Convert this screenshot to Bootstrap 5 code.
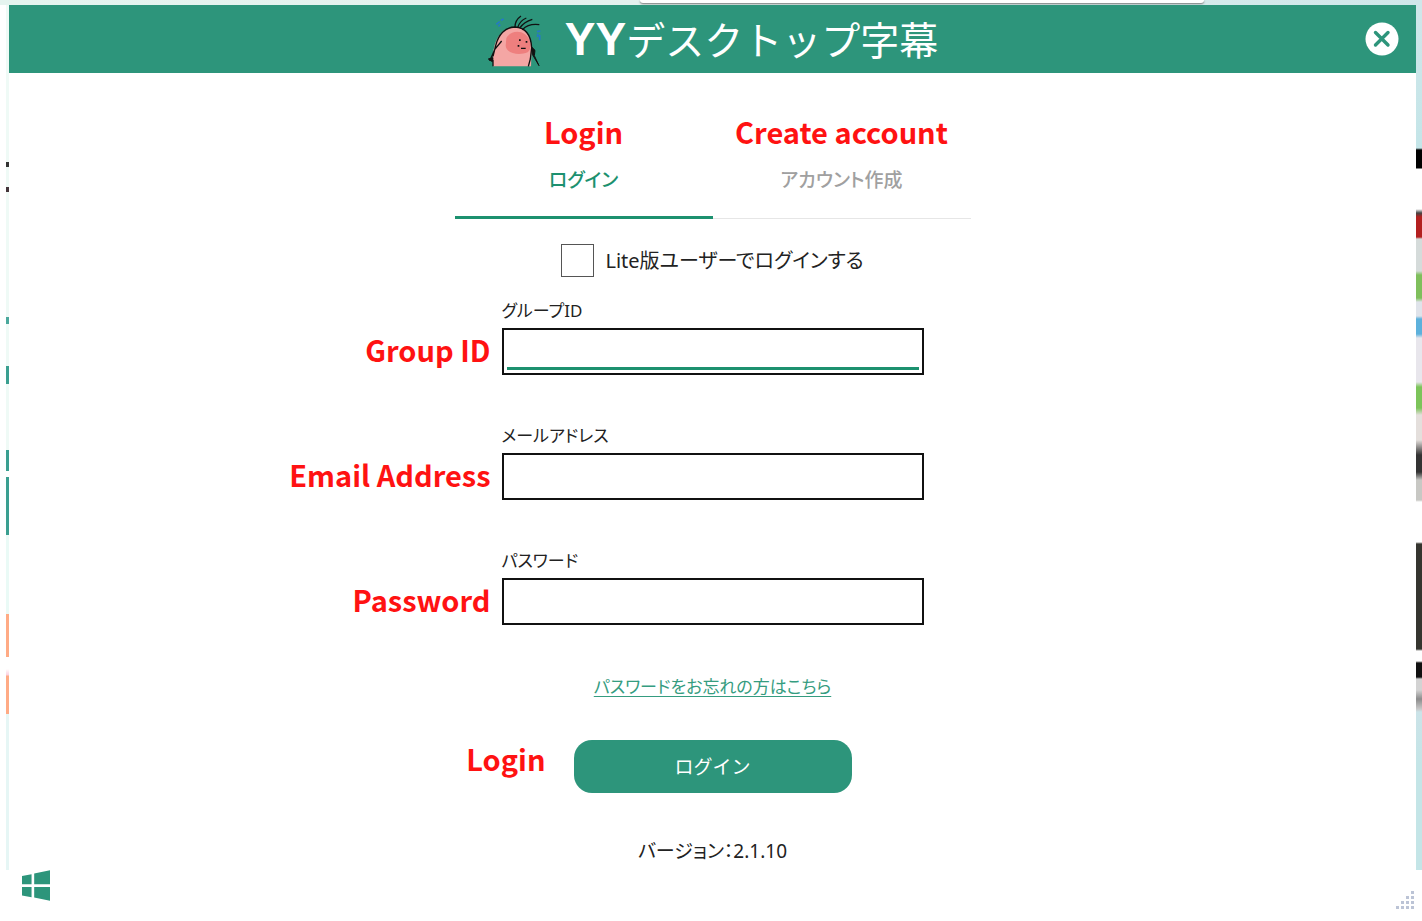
<!DOCTYPE html>
<html lang="ja">
<head>
<meta charset="utf-8">
<meta name="viewport" content="width=device-width, initial-scale=1">
<title>YYデスクトップ字幕</title>
<link href="https://cdn.jsdelivr.net/npm/bootstrap@5.3.0/dist/css/bootstrap.min.css" rel="stylesheet">
<style>
  :root { --brand: #2d957b; --brand-line: #1c916f; }
  body { font-family: "Noto Sans", "Noto Sans CJK JP", sans-serif; font-feature-settings: "palt"; color: #222; background: #fff; }

  /* desktop showing around the window */
  .desk-top { height: 5px; background: linear-gradient(90deg, #e5f4ef, #e3f1ee 45%, #cfe7ea); }
  .desk-popup { width: 564px; max-width: 55%; height: 3px; margin-left: 45%; background: #fff; border-radius: 0 0 4px 4px; box-shadow: 0 1px 2px #777; }
  .desk-left { width: 9px; padding-left: 6px; }
  .desk-left::before { content: ""; display: block; width: 3px; height: 865px; background: linear-gradient(#effaf6 157px, #333 157px 162px, #effaf6 162px 182px, #43353a 182px 187px, #effaf6 187px 312px, #4aa89c 312px 319px, #effaf6 319px 361px, #3a9f90 361px 379px, #effaf6 379px 445px, #3a9f90 445px 466px, #fff 466px 472px, #3a9f90 472px 530px, #eafaf6 530px 609px, #ffab85 609px 652px, #fff 652px 664px, #fbd0e0 670px, #ffab85 671px 709px, #e6f6f5 709px); }
  .desk-right { width: 6px; }
  .desk-right::before { content: ""; display: block; height: 865px; background: linear-gradient(#cfe7ea, #c4e5e8 143px, #000 145px 163px, #fff 164px 204px, #444 208px, #b3201f 212px 232px, #d5dbda 234px 266px, #7fbf5c 270px 293px, #dfe3ea 297px 311px, #5db1dc 314px 329px, #e8e6ec 333px 377px, #7cc45a 382px 403px, #e4dfdc 410px 435px, #333 450px 467px, #c8c8c4 475px 495px, #fff 497px 537px, #35352f 539px 644px, #fff 646px 656px, #111 658px 672px, #d3d3d3 674px 685px, #8c8c8c 694px, #c8c8c8 704px, #cbe3e8 707px, #c4e5e7 760px); }

  .titlebar { min-height: 68px; background: var(--brand); }
  .app-name { font-size: 39px; line-height: 56px; font-feature-settings: normal; }
  .app-name b { font-family: "Liberation Sans", sans-serif; font-size: 46px; }
  .app-close { right: 17px; top: 17px; line-height: 0; }

  .note { color: #ff1212; font-family: "Noto Sans CJK JP", sans-serif; font-weight: 700; font-size: 29px; line-height: 36px; }
  .tabs { width: 516px; max-width: 100%; margin-top: 40px; }
  .tab-item { border-bottom: 1px solid #e6e6e6; padding-bottom: 23px; color: #a0a0a0; font-size: 19px; line-height: 30px; font-weight: 500; }
  .tab-item .note { margin-bottom: 16px; }
  .tab-item.active { border-bottom: 3px solid var(--brand-line); padding-bottom: 21px; color: var(--brand-line); }

  .lite-row { margin-top: 25px; gap: 11px; font-size: 20px; line-height: 33px; }
  .lite-row .form-check-input { width: 33px; height: 33px; margin: 0; border: 1px solid #555; border-radius: 0; }

  .field-grid { display: grid; grid-template-columns: 1fr 422px 1fr; }
  .fields { margin-top: 22px; row-gap: 49px; }
  .field-label { grid-column: 2; font-size: 17px; line-height: 24px; margin-bottom: 5px; }
  .field-row .note { grid-column: 1; padding: 0 11px 5px 0; }
  .field-row .form-control { height: 47px; border: 2px solid #111; border-radius: 0; padding: 0 10px; font-size: 20px; }
  .field-row .is-current { background: linear-gradient(var(--brand-line), var(--brand-line)) center bottom 3px / calc(100% - 6px) 3px no-repeat #fff; }

  .forgot { margin-top: 47px; font-size: 17px; line-height: 30px; }
  .forgot a { color: #359c80; text-underline-offset: 3px; text-decoration-thickness: 1px; }
  .submit-grid { margin-top: 38px; grid-template-columns: 1fr 278px 1fr; }
  .submit-grid .note { padding-right: 28px; }
  .btn-login { --bs-btn-bg: var(--brand); --bs-btn-color: #fff; --bs-btn-hover-bg: #25806a; --bs-btn-hover-color: #fff; height: 53px; border: 0; border-radius: 18px; font-size: 19px; line-height: 30px; }
  .version { margin-top: 46px; font-size: 19px; line-height: 24px; }
  .app-foot { padding: 0 2px 12px 13px; }
</style>
</head>
<body class="d-flex flex-column min-vh-100">
<div class="desk-top"><div class="desk-popup"></div></div>
<div class="d-flex flex-grow-1">
  <div class="desk-left flex-shrink-0"></div>

  <div class="d-flex flex-column flex-grow-1">
    <header class="titlebar position-relative d-flex align-items-center justify-content-center text-white">
      <svg class="mt-1" width="54" height="54" viewBox="54 45 162 162" aria-hidden="true">
        <path d="M72 202V166C76 120 98 85 138 84C172 86 188 112 188 150L186 202Z" fill="#f4a6a4"/>
        <path d="M112 118C120 98 150 92 168 106C186 118 190 150 176 160C150 170 112 164 110 140Z" fill="#ee7f7e"/>
        <path d="M72 202V182M72 172L80 140C88 108 108 84 138 84C170 86 186 110 188 146M188 146L184 180L178 202M98 126L78 150L62 186" fill="none" stroke="#111" stroke-width="4"/>
        <path d="M138 84C138 70 146 58 156 51M146 86C150 72 160 62 172 57M153 86C160 76 174 66 190 61M160 92C172 80 190 74 211 77" fill="none" stroke="#111" stroke-width="4"/>
        <path d="M188 144L198 154L196 170L210 200L190 166ZM58 180L72 176L70 188Z" fill="#111" stroke="#111" stroke-width="3"/>
        <path d="M150 121h5v5h-5zM170 126h5v5h-5zM146 138h5v5h-5zM156 146h14v4h-14z" fill="#111"/>
        <path d="M82 76L92 68M88 82L94 77M96 64L104 60M204 98L214 96M206 104V114M212 108V124" fill="none" stroke="#2478c8" stroke-width="5"/>
      </svg>
      <h1 class="app-name fw-normal mb-0 ms-4"><b>YY</b>デスクトップ字幕</h1>
      <button type="button" class="app-close btn p-0 border-0 position-absolute" aria-label="閉じる">
        <svg width="34" height="34" viewBox="0 0 34 34"><circle cx="17" cy="17" r="16.5" fill="#fff"/><path d="M10.500 10.500L23 23M23 10.500L10.500 23" stroke="#2d957b" stroke-width="3.400" stroke-linecap="round"/></svg>
      </button>
    </header>

    <main>
      <nav class="tabs d-flex mx-auto">
        <a href="#login" class="tab-item active w-50 text-center text-decoration-none" aria-current="page"><span class="note d-block">Login</span>ログイン</a>
        <a href="#create" class="tab-item w-50 text-center text-decoration-none"><span class="note d-block">Create account</span>アカウント作成</a>
      </nav>

      <form id="login">
        <div class="lite-row d-flex justify-content-center align-items-center">
          <input class="form-check-input" type="checkbox" id="lite">
          <label for="lite">Lite版ユーザーでログインする</label>
        </div>

        <div class="fields d-grid">
          <div class="field-grid field-row align-items-center">
            <label class="field-label" for="group">グループID</label>
            <span class="note text-end">Group ID</span>
            <input class="form-control is-current" type="text" id="group">
          </div>
          <div class="field-grid field-row align-items-center">
            <label class="field-label" for="email">メールアドレス</label>
            <span class="note text-end">Email Address</span>
            <input class="form-control" type="email" id="email">
          </div>
          <div class="field-grid field-row align-items-center">
            <label class="field-label" for="password">パスワード</label>
            <span class="note text-end">Password</span>
            <input class="form-control" type="password" id="password">
          </div>
        </div>

        <p class="forgot text-center mb-0"><a href="#forgot">パスワードをお忘れの方はこちら</a></p>

        <div class="field-grid submit-grid">
          <span class="note text-end">Login</span>
          <button type="submit" class="btn btn-login">ログイン</button>
        </div>
      </form>
      <p class="version text-center mb-0">バージョン：2.1.10</p>
    </main>

    <footer class="app-foot mt-auto d-flex justify-content-between align-items-end">
      <svg class="mb-2" width="28" height="31" viewBox="65 1411 85 93" aria-hidden="true"><path d="M65 1429L94 1423V1454H65ZM102 1421L150 1411V1454H102ZM65 1462H94V1493L65 1488ZM102 1462H150V1504L102 1494Z" fill="#2d957b"/></svg>
      <svg width="18" height="18" viewBox="0 0 18 18" fill="#bcc4d6" aria-hidden="true"><path d="M15 0h3v3h-3zM10 5h3v3h-3zM15 5h3v3h-3zM5 10h3v3h-3zM10 10h3v3h-3zM15 10h3v3h-3zM0 15h3v3h-3zM5 15h3v3h-3zM10 15h3v3h-3zM15 15h3v3h-3z"/></svg>
    </footer>
  </div>

  <div class="desk-right flex-shrink-0"></div>
</div>
<script src="https://cdn.jsdelivr.net/npm/bootstrap@5.3.0/dist/js/bootstrap.bundle.min.js"></script>
</body>
</html>
